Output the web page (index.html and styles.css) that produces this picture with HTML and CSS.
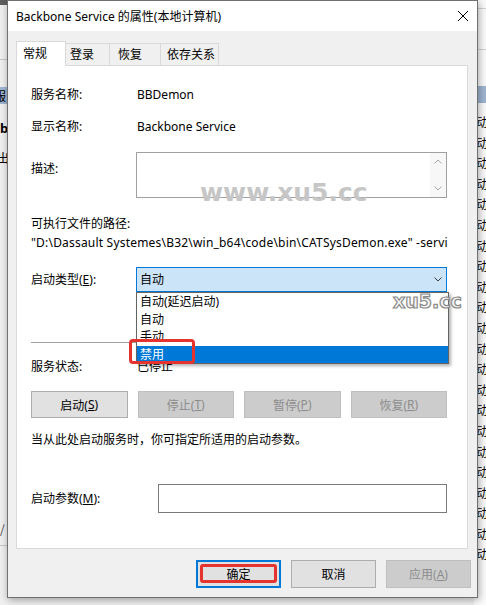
FILE: index.html
```html
<!DOCTYPE html>
<html lang="zh-CN">
<head>
<meta charset="utf-8">
<title>Backbone Service 的属性</title>
<link rel="stylesheet" href="styles.css">
</head>
<body>
<div class="desktop">
  <div class="bg-left">
    <div class="bgl-top"></div>
    <div class="bgl-line"></div>
    <div class="bgl-sel"><span class="bgl-shift">服</span></div>
    <div class="bgl-b">b</div>
    <div class="bgl-out">出</div>
    <div class="bgl-slash">/</div>
    <div class="bgl-bottom"></div>
  </div>
  <div class="bg-mid"></div>
  <div class="bg-right">
    <div class="bgr-head1"></div>
    <div class="bgr-head2"></div>
    <div class="bgr-sel"></div>
    <div class="bgr-rows">
      <div class="bgr-row">动</div><div class="bgr-row">动</div><div class="bgr-row">动</div><div class="bgr-row">动</div>
      <div class="bgr-row">动</div><div class="bgr-row">动</div><div class="bgr-row">动</div><div class="bgr-row">动</div>
      <div class="bgr-row">动</div><div class="bgr-row">动</div><div class="bgr-row">动</div><div class="bgr-row">动</div>
      <div class="bgr-row">动</div><div class="bgr-row">动</div><div class="bgr-row">动</div><div class="bgr-row">动</div>
      <div class="bgr-row">动</div><div class="bgr-row">动</div><div class="bgr-row">动</div><div class="bgr-row">动</div>
      <div class="bgr-row">动</div><div class="bgr-row">动</div>
    </div>
  </div>
</div>

<div class="dialog">
  <div class="titlebar">
    <span class="title">Backbone Service 的属性(本地计算机)</span>
    <svg class="close" width="10" height="10" viewBox="0 0 10 10"><path d="M0 0L10 10M10 0L0 10" stroke="#000" stroke-width="1" fill="none"/></svg>
  </div>
  <div class="tabs">
    <div class="tab active">常规</div>
    <div class="tab t2">登录</div>
    <div class="tab t3">恢复</div>
    <div class="tab t4">依存关系</div>
  </div>
  <div class="panel">
    <div class="row r1"><span class="label">服务名称:</span><span>BBDemon</span></div>
    <div class="row r2"><span class="label">显示名称:</span><span>Backbone Service</span></div>
    <div class="row r3">
      <span class="label desc-label">描述:</span>
      <div class="textarea">
        <div class="ta-text"></div>
        <div class="ta-scroll">
          <svg width="8" height="5" viewBox="0 0 8 5"><path d="M0.5 4.5L4 1L7.5 4.5" fill="none" stroke="#a8a8a8" stroke-width="1"/></svg>
          <svg width="8" height="5" viewBox="0 0 8 5"><path d="M0.5 0.5L4 4L7.5 0.5" fill="none" stroke="#a8a8a8" stroke-width="1"/></svg>
        </div>
      </div>
    </div>
    <div class="line exe-label">可执行文件的路径:</div>
    <div class="line path">"D:\Dassault Systemes\B32\win_b64\code\bin\CATSysDemon.exe" -service</div>
    <div class="row r-type">
      <span class="label">启动类型(<u>E</u>):</span>
      <div class="select">
        <span>自动</span>
        <svg width="8" height="5" viewBox="0 0 8 5"><path d="M0.5 0.5L4 4L7.5 0.5" fill="none" stroke="#3c3c3c" stroke-width="1"/></svg>
        <div class="droplist">
          <div class="opt">自动(延迟启动)</div>
          <div class="opt">自动</div>
          <div class="opt">手动</div>
          <div class="opt sel">禁用</div>
          <div class="redbox"></div>
        </div>
      </div>
    </div>
    <div class="sep"></div>
    <div class="row r-status"><span class="label">服务状态:</span><span>已停止</span></div>
    <div class="svc-buttons">
      <div class="btn">启动(<u>S</u>)</div>
      <div class="btn disabled">停止(<u>T</u>)</div>
      <div class="btn disabled">暂停(<u>P</u>)</div>
      <div class="btn disabled">恢复(<u>R</u>)</div>
    </div>
    <div class="line hint">当从此处启动服务时，你可指定所适用的启动参数。</div>
    <div class="row r-param">
      <span class="label param-label">启动参数(<u>M</u>):</span>
      <div class="input"></div>
    </div>
  </div>
  <div class="footer">
    <div class="btn fbtn ok"><span>确定</span><div class="redbox2"></div></div>
    <div class="btn fbtn">取消</div>
    <div class="btn fbtn disabled">应用(<u>A</u>)</div>
  </div>
</div>

<div class="wm1">www.xu5.cc</div>
<div class="wm2">xu5.cc</div>
</body>
</html>
```

FILE: styles.css
```css
* { box-sizing: border-box; }
html, body { margin: 0; padding: 0; }
body {
  width: 486px;
  height: 605px;
  overflow: hidden;
  position: relative;
  background: #ffffff;
  font-family: "Noto Sans", "Noto Sans CJK SC", sans-serif;
  font-size: 12px;
  color: #000;
}
u { text-decoration: underline; text-underline-offset: 1px; }

/* ---------- background window (services list) ---------- */
.desktop {
  display: grid;
  grid-template-columns: 10px 1fr 12px;
  height: 605px;
  font-family: "Noto Sans CJK SC", sans-serif;
}
.bg-left {
  background: #f0f0f0;
  overflow: hidden;
  display: flex;
  flex-direction: column;
}
.bgl-top { height: 5px; background: #5e5e5e; }
.bgl-line { margin-top: 54px; height: 1px; background: #c8c8c8; }
.bgl-sel {
  margin-top: 27px;
  height: 17px;
  background: #9fb5d1;
  line-height: 17px;
  white-space: nowrap;
}
.bgl-shift { margin-left: -6px; }
.bgl-b { margin-top: 16px; line-height: 16px; font-weight: bold; font-family: "Noto Sans", sans-serif; font-size: 13px; margin-left: 0; }
.bgl-out { margin-top: 14px; line-height: 16px; margin-left: -3px; white-space: nowrap; }
.bgl-slash { margin-top: 355px; line-height: 16px; color: #444; }
.bgl-bottom { margin-top: 8px; height: 1px; background: #c8c8c8; }

.bg-mid { background: #f0f0f0; }

.bg-right {
  background: #fbfbfb;
  overflow: hidden;
  display: flex;
  flex-direction: column;
}
.bgr-head1 { height: 9px; border-bottom: 1px solid #d5d5d5; }
.bgr-head2 { height: 41px; border-bottom: 1px solid #d5d5d5; }
.bgr-sel { margin-top: 36px; height: 17px; background: #9fb5d1; }
.bgr-rows { margin-top: 9px; display: flex; flex-direction: column; }
.bgr-row { height: 20.6px; line-height: 20.6px; padding-left: 2px; white-space: nowrap; }

/* ---------- dialog ---------- */
.dialog {
  position: absolute;
  left: 7px;
  top: 0;
  width: 471px;
  height: 598px;
  border: 1px solid #707070;
  background: #f0f0f0;
  box-shadow: 1px 2px 8px rgba(0, 0, 0, 0.35);
  display: flex;
  flex-direction: column;
}
.titlebar {
  height: 30px;
  flex: none;
  background: #fff;
  display: flex;
  align-items: center;
  justify-content: space-between;
  padding: 0 9px 1px 8px;
}
.title { font-size: 12px; }
.close { display: block; }

.tabs {
  display: flex;
  align-items: flex-end;
  padding: 10px 0 0 8px;
  height: 34px;
  flex: none;
  position: relative;
  z-index: 1;
}
.tab {
  height: 22px;
  line-height: 21px;
  border: 1px solid #d9d9d9;
  border-bottom: none;
  background: #f0f0f0;
  margin-left: -1px;
  white-space: nowrap;
}
.tab.active {
  height: 25px;
  margin-left: 0;
  margin-bottom: -1px;
  background: #fff;
  width: 50px;
  padding-left: 6px;
  line-height: 23px;
}
.tab.t2 { width: 45px; padding-left: 4px; }
.tab.t3 { width: 52px; padding-left: 8px; }
.tab.t4 { width: 59px; padding-left: 6px; }

.panel {
  margin-left: 8px;
  width: 452px;
  height: 484px;
  flex: none;
  background: #fff;
  border: 1px solid #d9d9d9;
  padding: 20px 20px 0 14px;
  display: flex;
  flex-direction: column;
}
.row { display: flex; align-items: center; line-height: 17px; }
.line { line-height: 17px; white-space: nowrap; }
.label { width: 106px; flex: none; }
.r2 { margin-top: 15px; }
.r3 { margin-top: 17px; align-items: flex-start; }
.desc-label { margin-top: 8px; }
.textarea {
  margin-left: -1px;
  width: 312px;
  height: 46px;
  border: 1px solid #a0a0a0;
  display: flex;
}
.ta-text { flex: 1; }
.ta-scroll {
  width: 16px;
  display: flex;
  flex-direction: column;
  justify-content: space-between;
  align-items: center;
  padding: 6px 0 6px;
  background: #f7f7f7;
}
.ta-scroll svg { display: block; }
.exe-label { margin-top: 17px; }
.path { margin-top: 2px; width: 417px; overflow: hidden; letter-spacing: 0.2px; }
.r-type { margin-top: 16px; }
.select {
  position: relative;
  margin-left: -1px;
  width: 312px;
  height: 25px;
  border: 1px solid #0078d7;
  background: #cce4f7;
  display: flex;
  align-items: center;
  justify-content: space-between;
  padding: 0 4px 0 3px;
}
.select > svg { display: block; }
.droplist {
  position: absolute;
  left: -1px;
  top: 24px;
  width: 313px;
  height: 72px;
  border: 1px solid #646464;
  background: #fff;
  box-shadow: 2px 2px 3px rgba(0, 0, 0, 0.3);
  z-index: 5;
  display: flex;
  flex-direction: column;
}
.opt { height: 17.5px; line-height: 17.5px; padding-left: 3px; }
.opt.sel { background: #0078d7; color: #fff; }
.redbox {
  position: absolute;
  left: -8px;
  top: 46px;
  width: 66px;
  height: 25px;
  border: 3px solid #e53330;
  border-radius: 4px;
}
.sep { margin-top: 50px; height: 1px; background: #a0a0a0; flex: none; }
.r-status { margin-top: 15px; }
.svc-buttons {
  margin-top: 16px;
  display: grid;
  grid-template-columns: repeat(4, 1fr);
  column-gap: 10px;
}
.btn {
  height: 27px;
  border: 1px solid #adadad;
  background: #e1e1e1;
  display: flex;
  align-items: center;
  justify-content: center;
  white-space: nowrap;
}
.btn.disabled {
  background: #cccccc;
  border-color: #bfbfbf;
  color: #8c8c8c;
}
.hint { margin-top: 13px; }
.r-param { margin-top: 36px; }
.param-label { width: 127px; }
.input {
  width: 290px;
  height: 29px;
  border: 1px solid #7a7a7a;
  background: #fff;
}

.footer {
  margin-top: 11px;
  display: flex;
  justify-content: flex-end;
  column-gap: 10px;
  padding-right: 6px;
}
.fbtn { width: 85px; height: 28px; }
.ok {
  position: relative;
  border: 2px solid #0078d7;
}
.redbox2 {
  position: absolute;
  left: 2px;
  top: 2px;
  right: 2px;
  bottom: 3px;
  border: 3px solid #e53330;
  border-radius: 3px;
}

/* ---------- watermarks ---------- */
.wm1 {
  position: absolute;
  left: 200px;
  top: 180px;
  font-family: "DejaVu Sans", sans-serif;
  font-weight: bold;
  font-size: 25px;
  line-height: 25px;
  color: #c6c6c6;
  z-index: 10;
}
.wm2 {
  position: absolute;
  left: 393px;
  top: 292px;
  font-family: "DejaVu Sans", sans-serif;
  font-weight: bold;
  font-size: 19px;
  line-height: 19px;
  color: #f4f4f4;
  -webkit-text-stroke: 1.2px #8a8a8a;
  z-index: 10;
}
```
